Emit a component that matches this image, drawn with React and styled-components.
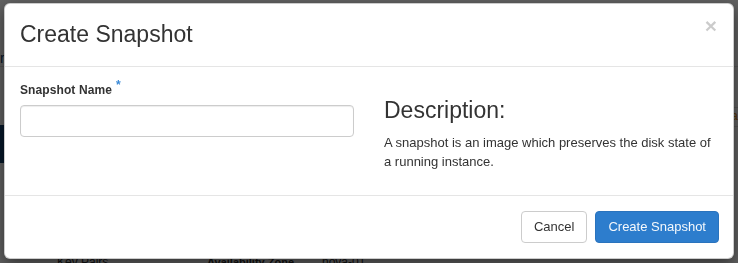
import React from 'react';
import styled, { createGlobalStyle } from 'styled-components';

const GlobalStyle = createGlobalStyle`
    html, body {
        margin: 0;
        padding: 0;
        width: 738px;
        height: 263px;
        overflow: hidden;
        font-family: "Liberation Sans", Arial, sans-serif;
        color: #333;
    }
    * {
        box-sizing: border-box;
    }
`

/* page that sits behind the dialog */

const Page = styled.div`
    width: 738px;
    height: 263px;
    background: #fff;
    display: flex;
    flex-direction: column;
    overflow: hidden;
`

const TopBar = styled.div`
    height: 67px;
    flex-shrink: 0;
    border-bottom: 1px solid #ddd;
    display: flex;
    align-items: flex-end;
    color: #0c3c6e;
    font-size: 14px;
`

const Middle = styled.div`
    display: flex;
    height: 186px;
    flex-shrink: 0;
`

const Sidebar = styled.div`
    width: 190px;
    padding-top: 58px;
`

const NavActive = styled.div`
    height: 38px;
    background: #0e3d6b;
`

const Main = styled.div`
    flex: 1;
    display: flex;
    flex-direction: column;
    padding-top: 22px;
`

const TableLine = styled.div`
    height: 19px;
    border-bottom: 1px solid #ddd;
    font-size: 13px;
    text-align: right;
    color: #e08a1e;
`

const DetailRow = styled.div`
    display: flex;
    font-size: 12px;
    line-height: 15px;
    padding-top: 2px;
`

const DetailKey = styled.span`
    width: ${p => p.$w}px;
    margin-left: ${p => p.$ml || 0}px;
    font-size: ${p => (p.$bold ? '11px' : '12px')};
    font-weight: ${p => (p.$bold ? 'bold' : 'normal')};
    white-space: nowrap;
`

/* the dialog */

const Backdrop = styled.div`
    position: fixed;
    inset: 0;
    background: rgba(0, 0, 0, 0.62);
    padding: 3px 4px 0 4px;
`

const Modal = styled.div`
    width: 730px;
    background: #fff;
    border: 1px solid rgba(0, 0, 0, 0.2);
    border-radius: 6px;
    box-shadow: 0 5px 15px rgba(0, 0, 0, 0.5);
`

const Header = styled.div`
    display: flex;
    justify-content: space-between;
    align-items: flex-start;
    padding: 17px 16px 19px 15px;
    border-bottom: 1px solid #e5e5e5;
`

const Title = styled.h4`
    margin: 0;
    font-size: 23px;
    line-height: 26px;
    font-weight: normal;
    color: #333;
`

const Close = styled.button`
    margin-top: -6px;
    padding: 0;
    border: 0;
    background: transparent;
    font-family: "Liberation Sans", Arial, sans-serif;
    font-size: 21px;
    font-weight: bold;
    line-height: 1;
    color: #000;
    opacity: 0.2;
    cursor: pointer;
`

const Body = styled.div`
    display: grid;
    grid-template-columns: 334px 1fr;
    column-gap: 30px;
    padding: 15px 15px 24px 15px;
`

const Column = styled.div`
    display: flex;
    flex-direction: column;
`

const Label = styled.label`
    display: block;
    font-size: 12px;
    line-height: 17px;
    font-weight: bold;
    letter-spacing: 0.1px;
    color: #333;
    margin-bottom: 6px;
`

const Required = styled.span`
    color: #3a89d6;
    font-size: 12px;
    margin-left: 4px;
    vertical-align: super;
    line-height: 0;
`

const Input = styled.input`
    width: 100%;
    height: 32px;
    padding: 6px 12px;
    font-family: inherit;
    font-size: 13px;
    border: 1px solid #ccc;
    border-radius: 4px;
    box-shadow: inset 0 1px 1px rgba(0, 0, 0, 0.075);
    outline: none;
`

const Heading = styled.h3`
    margin: 15px 0 11px 0;
    font-size: 23px;
    line-height: 26px;
    font-weight: normal;
    color: #333;
`

const Text = styled.p`
    margin: 0;
    font-size: 13px;
    line-height: 18.57px;
    color: #333;
`

const Footer = styled.div`
    display: flex;
    justify-content: flex-end;
    gap: 8px;
    padding: 15px 14px 15px 15px;
    border-top: 1px solid #e5e5e5;
`

const Button = styled.button`
    height: 32px;
    padding: 6px 12px;
    font-family: "Liberation Sans", Arial, sans-serif;
    font-size: 13px;
    line-height: 18px;
    border-radius: 4px;
    border: 1px solid ${p => (p.$primary ? '#2a73bd' : '#ccc')};
    background: ${p => (p.$primary ? '#2d7dcd' : '#fff')};
    color: ${p => (p.$primary ? '#f4f8fc' : '#333')};
    cursor: pointer;
`

const App = () => {
    return (
        <>
            <GlobalStyle />
            <Page>
                <TopBar>r</TopBar>
                <Middle>
                    <Sidebar>
                        <NavActive />
                    </Sidebar>
                    <Main>
                        <TableLine />
                        <TableLine>a</TableLine>
                    </Main>
                </Middle>
                <DetailRow>
                    <DetailKey $w={150} $ml={57}>Key Pairs</DetailKey>
                    <DetailKey $w={115} $bold>Availability Zone</DetailKey>
                    <DetailKey $w={80}>nova-01</DetailKey>
                </DetailRow>
            </Page>
            <Backdrop>
                <Modal>
                    <Header>
                        <Title>Create Snapshot</Title>
                        <Close aria-label="Close">×</Close>
                    </Header>
                    <Body>
                        <Column>
                            <Label>
                                Snapshot Name<Required>*</Required>
                            </Label>
                            <Input type="text" />
                        </Column>
                        <Column>
                            <Heading>Description:</Heading>
                            <Text>
                                A snapshot is an image which preserves the disk state of a running instance.
                            </Text>
                        </Column>
                    </Body>
                    <Footer>
                        <Button>Cancel</Button>
                        <Button $primary>Create Snapshot</Button>
                    </Footer>
                </Modal>
            </Backdrop>
        </>
    );
}

export default App;
